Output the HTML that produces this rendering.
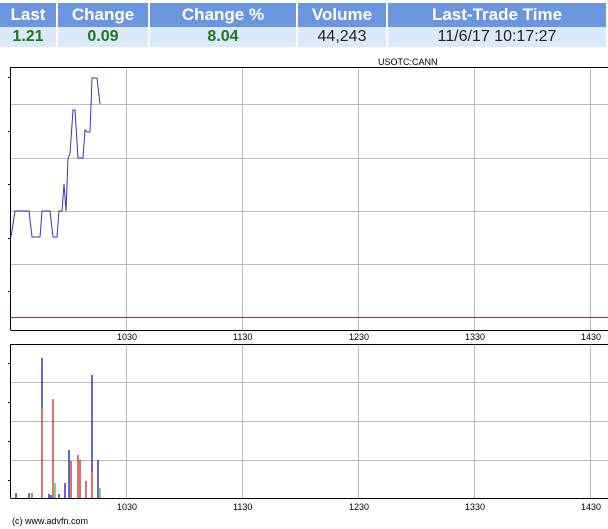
<html><head><style>
body{margin:0;background:#fff;width:608px;height:529px;position:relative;font-family:"Liberation Sans",Arial,sans-serif;overflow:hidden}
table{position:absolute;left:0;top:3px;border-collapse:separate;border-spacing:2px 0;width:610px;margin-left:-2px}
th{background:#6a95df;color:#fff;font-size:17px;height:24px;padding:0;font-weight:bold}
td{background:#dce9fb;font-size:16px;height:20px;padding:0;text-align:center;color:#222}
td.g{color:#1a7a1a;font-weight:bold}
</style></head><body>
<table><tr><th style="width:56px">Last</th><th style="width:90px">Change</th><th style="width:146px">Change %</th><th style="width:88px">Volume</th><th>Last-Trade Time</th></tr>
<tr><td class="g">1.21</td><td class="g">0.09</td><td class="g">8.04</td><td>44,243</td><td>11/6/17 10:17:27</td></tr></table>
<svg width="608" height="529" style="position:absolute;left:0;top:0" font-family="Liberation Sans,Arial,sans-serif" font-size="9">
<text x="378" y="65" font-size="9" fill="#000">USOTC:CANN</text>
<g stroke="#bbb" stroke-width="1">
<line x1="126.5" y1="67" x2="126.5" y2="330"/><line x1="242.5" y1="67" x2="242.5" y2="330"/><line x1="358.5" y1="67" x2="358.5" y2="330"/><line x1="474.5" y1="67" x2="474.5" y2="330"/><line x1="590.5" y1="67" x2="590.5" y2="330"/>
<line x1="10" y1="104.5" x2="608" y2="104.5"/><line x1="10" y1="158.5" x2="608" y2="158.5"/><line x1="10" y1="211.5" x2="608" y2="211.5"/><line x1="10" y1="264.5" x2="608" y2="264.5"/>
<line x1="126.5" y1="344" x2="126.5" y2="498"/><line x1="242.5" y1="344" x2="242.5" y2="498"/><line x1="358.5" y1="344" x2="358.5" y2="498"/><line x1="474.5" y1="344" x2="474.5" y2="498"/><line x1="590.5" y1="344" x2="590.5" y2="498"/>
<line x1="10" y1="382.5" x2="608" y2="382.5"/><line x1="10" y1="421.5" x2="608" y2="421.5"/><line x1="10" y1="460.5" x2="608" y2="460.5"/>
</g>
<path d="M10.5 330V67.5H608M10.5 330.5H608M10.5 498V344.5H608M10.5 498.5H608" fill="none" stroke="#000"/>
<rect x="11" y="317" width="597" height="1" fill="#d02020"/>
<g stroke="#000"><path d="M8 77.5h3M8 131.5h3M8 184.5h3M8 238.5h3M8 291.5h3M8 363.5h3M8 402.5h3M8 441.5h3M8 480.5h3"/></g>
<polyline fill="none" stroke="#33c" stroke-width="1" points="11,237 15,211 29,211 32,237 40,237 42,211 50,211 53,237 57,237 59,211 62,211 64,184 66,211 68,158 70,154 73,110 75,110 78,158 83,158 85,130 87,132 90,132 92,78 97,78 100,104"/>
<g stroke-width="1.2">
<path stroke="#00a" d="M16 498v-5M29 498v-5M42 408v-50M49 498v-4M51 498v-3M59 498v-4M65 498v-15M69 498v-48M92 472v-97M98 498v-38"/>
<path stroke="#c11" d="M32 498v-5M42 498v-90M53 498v-99M71 498v-37M78 498v-43M80 498v-38M86 498v-17M92 498v-26"/>
<path stroke="#2b2" d="M55 498v-15M100 498v-10"/>
</g>
<g fill="#000"><text x="117" y="340">1030</text><text x="233" y="340">1130</text><text x="349" y="340">1230</text><text x="465" y="340">1330</text><text x="581" y="340">1430</text>
<text x="117" y="510">1030</text><text x="233" y="510">1130</text><text x="349" y="510">1230</text><text x="465" y="510">1330</text><text x="581" y="510">1430</text>
<text x="12" y="524">(c) www.advfn.com</text></g>
</svg>
</body></html>
